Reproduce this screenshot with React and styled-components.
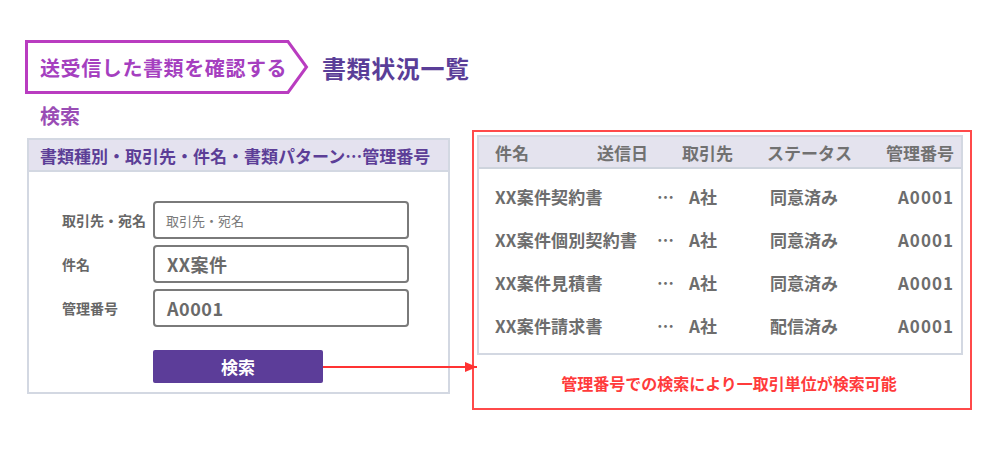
import React from "react";
import styled, { createGlobalStyle } from "styled-components";

const GlobalStyle = createGlobalStyle`
  html, body { margin: 0; padding: 0; background: #ffffff; }
  body { font-family: "Noto Sans CJK JP", "Noto Sans", sans-serif; }
  * { box-sizing: border-box; }
`;

const Page = styled.div`
  width: 1000px;
  height: 453px;
  padding: 40px 0 0 25px;
  background: #fff;
`;

const TitleRow = styled.div`
  display: flex;
  align-items: center;
`;

const Banner = styled.div`
  position: relative;
  width: 284px;
  height: 54px;
  display: flex;
  align-items: center;
  padding-left: 15px;
`;

const BannerShape = styled.svg`
  position: absolute;
  inset: 0;
  width: 100%;
  height: 100%;
`;

const BannerText = styled.span`
  position: relative;
  font-size: 20px;
  font-weight: 700;
  color: #a53fbf;
  letter-spacing: 0.6px;
`;

const PageTitle = styled.h1`
  margin: 0 0 0 13px;
  font-size: 24px;
  font-weight: 700;
  color: #5a3e98;
  letter-spacing: 0.6px;
`;

const Content = styled.div`
  display: flex;
  align-items: flex-start;
  margin-top: 10px;
`;

const SearchColumn = styled.div`
  display: flex;
  flex-direction: column;
  padding-left: 2px;
`;

const SectionLabel = styled.div`
  padding-left: 13px;
  font-size: 20px;
  line-height: 24px;
  font-weight: 700;
  color: #9a4db5;
`;

const SearchPanel = styled.div`
  margin-top: 10px;
  width: 423px;
  border: 2px solid #d3d8e2;
`;

const PanelHeader = styled.div`
  height: 32px;
  display: flex;
  align-items: center;
  padding-left: 11px;
  background: #e4e2ef;
  border-bottom: 2px solid #d3d8e2;
  font-size: 17px;
  font-weight: 700;
  color: #5c3e97;
`;

const PanelBody = styled.div`
  padding: 29px 0 9px 33px;
  display: flex;
  flex-direction: column;
  gap: 6px;
`;

const FieldRow = styled.div`
  display: flex;
  align-items: center;
`;

const FieldLabel = styled.label`
  width: 91px;
  font-size: 14px;
  font-weight: 700;
  color: #666;
`;

const Input = styled.div`
  width: 256px;
  height: 38px;
  border: 2px solid #7a7a7a;
  border-radius: 4px;
  display: flex;
  align-items: center;
  padding-left: ${(p) => (p.$placeholder ? "11px" : "12px")};
  font-size: ${(p) => (p.$placeholder ? "13px" : "18px")};
  font-weight: ${(p) => (p.$placeholder ? 400 : 700)};
  color: ${(p) => (p.$placeholder ? "#7a7a7a" : "#6a6a6a")};
  letter-spacing: ${(p) => (p.$placeholder ? "0" : "0.5px")};
`;

const ButtonRow = styled.div`
  margin-top: 17px;
  padding-left: 91px;
  display: flex;
`;

const SearchButton = styled.button`
  position: relative;
  width: 170px;
  height: 33px;
  border: none;
  border-radius: 2px;
  background: #5c3d99;
  color: #fff;
  font-family: inherit;
  font-size: 17px;
  font-weight: 700;
  padding: 0;
`;

const Connector = styled.span`
  position: absolute;
  left: 100%;
  top: 50%;
  width: 154px;
  height: 2px;
  margin-top: -1px;
  background: #ff3333;
  &::after {
    content: "";
    position: absolute;
    right: 0;
    top: -4px;
    border-left: 12px solid #ff3333;
    border-top: 5px solid transparent;
    border-bottom: 5px solid transparent;
  }
`;

const ResultBox = styled.div`
  margin: 26px 0 0 22px;
  width: 500px;
  height: 280px;
  border: 2px solid #ff4a4a;
  padding: 3px 7px 0 3px;
`;

const Table = styled.div`
  border: 2px solid #d3d8e2;
`;

const Row = styled.div`
  display: grid;
  grid-template-columns: ${(p) => p.$cols};
  align-items: center;
  height: ${(p) => p.$h}px;
  padding: 0 7px 0 16px;
  font-size: 17px;
  font-weight: 700;
  color: #6d6d6d;
`;

const HeaderRow = styled(Row)`
  background: #e4e3ee;
  border-bottom: 2px solid #ced4dd;
  height: 32px;
  color: #717171;
`;

const Body = styled.div`
  padding: 6px 0 6px;
`;

const NameCell = styled.span`
  letter-spacing: 0.2px;
`;

const RightCell = styled.span`
  text-align: right;
  letter-spacing: ${(p) => (p.$latin ? "1px" : "0")};
`;

const Note = styled.div`
  margin-top: 17px;
  padding-left: 18px;
  text-align: center;
  font-size: 16px;
  line-height: 22px;
  font-weight: 700;
  color: #ff3b3b;
`;

const headCols = "102px 85px 85px 1fr auto";
const rowCols = "162px 32px 81px 1fr auto";

const rows = [
  ["XX案件契約書", "同意済み"],
  ["XX案件個別契約書", "同意済み"],
  ["XX案件見積書", "同意済み"],
  ["XX案件請求書", "配信済み"],
];

export default function App() {
  return (
    <>
      <GlobalStyle />
      <Page>
        <TitleRow>
          <Banner>
            <BannerShape viewBox="0 0 284 54" preserveAspectRatio="none">
              <polygon
                points="1.5,1.5 263,1.5 281.5,27 263,52.5 1.5,52.5"
                fill="#fff"
                stroke="#b93cc0"
                strokeWidth="3"
              />
            </BannerShape>
            <BannerText>送受信した書類を確認する</BannerText>
          </Banner>
          <PageTitle>書類状況一覧</PageTitle>
        </TitleRow>
        <Content>
          <SearchColumn>
            <SectionLabel>検索</SectionLabel>
            <SearchPanel>
              <PanelHeader>書類種別・取引先・件名・書類パターン…管理番号</PanelHeader>
              <PanelBody>
                <FieldRow>
                  <FieldLabel>取引先・宛名</FieldLabel>
                  <Input $placeholder>取引先・宛名</Input>
                </FieldRow>
                <FieldRow>
                  <FieldLabel>件名</FieldLabel>
                  <Input>XX案件</Input>
                </FieldRow>
                <FieldRow>
                  <FieldLabel>管理番号</FieldLabel>
                  <Input>A0001</Input>
                </FieldRow>
                <ButtonRow>
                  <SearchButton>
                    検索
                    <Connector />
                  </SearchButton>
                </ButtonRow>
              </PanelBody>
            </SearchPanel>
          </SearchColumn>
          <ResultBox>
            <Table>
              <HeaderRow $cols={headCols}>
                <span>件名</span>
                <span>送信日</span>
                <span>取引先</span>
                <span>ステータス</span>
                <RightCell>管理番号</RightCell>
              </HeaderRow>
              <Body>
                {rows.map(([name, status]) => (
                  <Row key={name} $cols={rowCols} $h={43}>
                    <NameCell>{name}</NameCell>
                    <span>…</span>
                    <span>A社</span>
                    <span>{status}</span>
                    <RightCell $latin>A0001</RightCell>
                  </Row>
                ))}
              </Body>
            </Table>
            <Note>管理番号での検索により一取引単位が検索可能</Note>
          </ResultBox>
        </Content>
      </Page>
    </>
  );
}
